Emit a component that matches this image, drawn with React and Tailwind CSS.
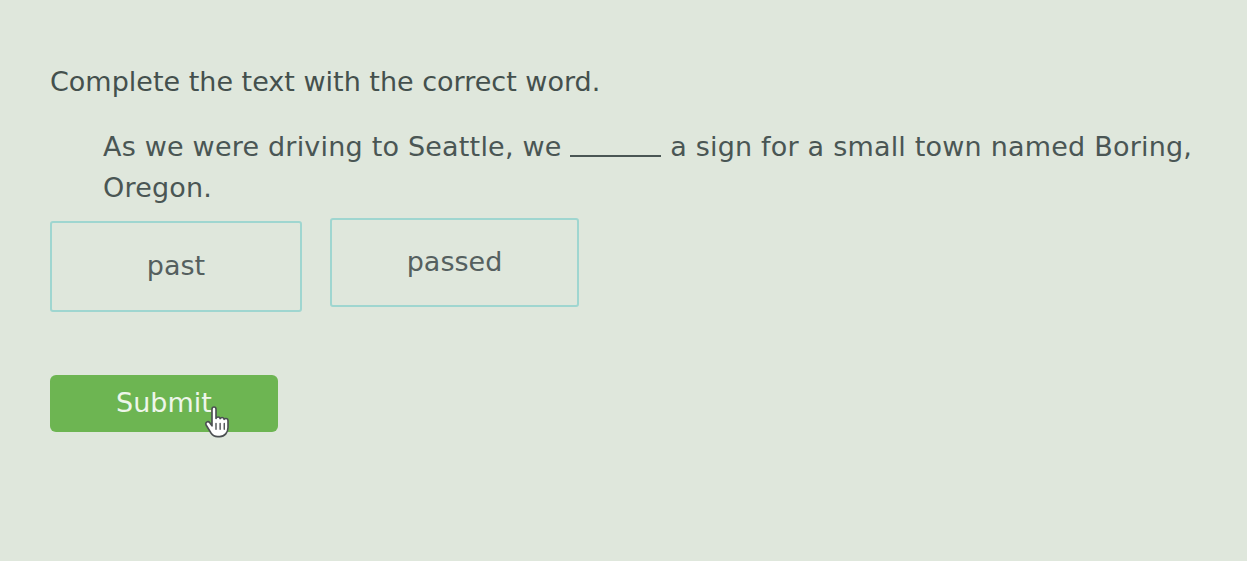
export default function App() {
  return (
    <div
      className="w-[1247px] h-[561px] overflow-hidden bg-[#dfe7dc] text-[#4a5654]"
      style={{ fontFamily: '"DejaVu Sans", Verdana, sans-serif' }}
    >
      <div className="pl-[50px] pt-[62px]">
        <h1 className="text-[27px] leading-[40px] text-[#44504d]">
          Complete the text with the correct word.
        </h1>
        <p className="mt-[24px] ml-[53px] w-[1120px] text-[27px] leading-[41px] tracking-[0.2px]">
          As we were driving to Seattle, we{" "}
          <span className="inline-block w-[91px] h-[22px] border-b-2 border-[#4a5654] align-baseline translate-y-[1px]"></span>{" "}
          a sign for a small town named Boring, Oregon.
        </p>
        <div className="mt-[13px] flex gap-[28px]">
          <button className="w-[252px] h-[91px] rounded-[3px] border-2 border-[#9fd6d0] text-[27px] text-[#55605f] bg-transparent">
            past
          </button>
          <button className="w-[249px] h-[89px] rounded-[3px] border-2 border-[#9fd6d0] text-[27px] text-[#55605f] bg-transparent -translate-y-[3px]">
            passed
          </button>
        </div>
        <div className="mt-[63px] relative w-[228px]">
          <button className="w-[228px] h-[57px] rounded-[6px] bg-[#6db552] text-[27px] text-[#eef6ea]">
            Submit
          </button>
          <svg
            className="absolute left-[152px] top-[31px]"
            width="30"
            height="35"
            viewBox="0 0 24 28"
          >
            <path
              d="M8 2.5c0-1 .7-1.7 1.6-1.7s1.6.7 1.6 1.7V10c.3-.8 1-1.2 1.7-1.2.9 0 1.5.6 1.6 1.4.3-.6.9-1 1.6-1 .9 0 1.5.7 1.6 1.5.3-.4.8-.7 1.4-.7 1 0 1.7.8 1.7 1.8v5.3c0 4-2.6 7.4-6.6 7.4h-1.7c-2.4 0-4.1-1.1-5.3-2.9L3.4 15.4c-.6-.9-.4-2 .4-2.5.8-.5 1.8-.3 2.4.5L8 15.9Z"
              fill="#ffffff"
              stroke="#4b4f52"
              strokeWidth="1.3"
              strokeLinejoin="round"
            />
            <path d="M11.2 14v4.6M14.5 14v4.6M17.8 14v4.6" stroke="#4b4f52" strokeWidth="1.1" strokeLinecap="round" />
          </svg>
        </div>
      </div>
    </div>
  );
}
